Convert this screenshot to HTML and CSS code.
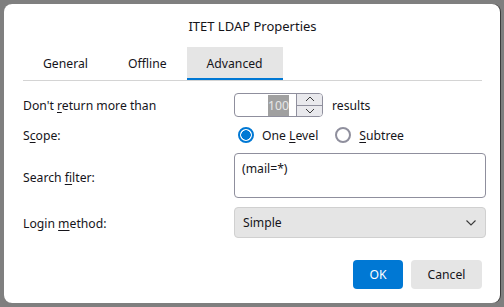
FILE: index.html
```html
<!DOCTYPE html>
<html lang="en">
<head>
  <meta charset="UTF-8">
  <title>ITET LDAP Properties</title>
  <link rel="stylesheet" href="styles.css">
</head>
<body>
  <div class="dialog">
    <div class="dialog-title">ITET LDAP Properties</div>

    <div class="tabs">
      <div class="tab">General</div>
      <div class="tab">Offline</div>
      <div class="tab active">Advanced</div>
    </div>

    <div class="form">
      <div class="label">Don't <u>r</u>eturn more than</div>
      <div class="control inline">
        <div class="spinner">
          <div class="spinner-value"><span class="selected">100</span></div>
          <div class="spinner-buttons">
            <div class="spin-btn">
              <svg viewBox="0 0 12 8"><path d="M2 6l4-4 4 4" fill="none" stroke="#3a3a3a" stroke-width="1"/></svg>
            </div>
            <div class="spin-btn">
              <svg viewBox="0 0 12 8"><path d="M2 2l4 4 4-4" fill="none" stroke="#3a3a3a" stroke-width="1"/></svg>
            </div>
          </div>
        </div>
        <span>results</span>
      </div>

      <div class="label">S<u>c</u>ope:</div>
      <div class="control inline radios">
        <label class="radio"><span class="radio-dot checked"></span><span>One <u>L</u>evel</span></label>
        <label class="radio"><span class="radio-dot"></span><span><u>S</u>ubtree</span></label>
      </div>

      <div class="label filter-label">Search <u>f</u>ilter:</div>
      <div class="control">
        <div class="textarea">(mail=*)</div>
      </div>

      <div class="label method-label">Login <u>m</u>ethod:</div>
      <div class="control">
        <div class="select">
          <span>Simple</span>
          <svg viewBox="0 0 12 8"><path d="M1.5 1.5l4.5 4.5 4.5-4.5" fill="none" stroke="#3a3a3a" stroke-width="1.1"/></svg>
        </div>
      </div>
    </div>

    <div class="buttons">
      <button class="btn primary">OK</button>
      <button class="btn">Cancel</button>
    </div>
  </div>
</body>
</html>
```

FILE: styles.css
```css
* {
  box-sizing: border-box;
  margin: 0;
  padding: 0;
}

body {
  font-family: 'Noto Sans', sans-serif;
  font-size: 12px;
  color: #15141a;
  background-color: #7f7f7f;
  padding: 4px;
  height: 307px;
  overflow: hidden;
}

.dialog {
  background-color: #fff;
  border-radius: 8px;
  width: 496px;
  height: 299px;
  padding: 0 18px 0 19px;
  box-shadow: 1px 0 0 #3c3c3c;
}

.dialog-title {
  text-align: center;
  font-size: 13px;
  height: 43px;
  line-height: 44px;
}

.tabs {
  display: flex;
  border-bottom: 1px solid #d4d4d4;
  width: 459px;
}

.tab {
  padding: 0 20px;
  height: 33px;
  line-height: 33px;
  font-size: 12.2px;
}

.tab.active {
  background-color: #e5e5e5;
  border-bottom: 2px solid #0078d4;
}

.form {
  display: grid;
  grid-template-columns: 211px 252px;
  align-items: center;
  margin-top: 12px;
}

.label {
  font-size: 12.2px;
  padding-top: 1px;
}

.filter-label {
  padding-top: 3px;
}

.method-label {
  padding-top: 11px;
}

.label u, .radio u {
  text-underline-offset: 2px;
}

.control.inline {
  display: flex;
  align-items: center;
  gap: 9px;
}

.spinner {
  display: flex;
  width: 89px;
  height: 24px;
  border: 1px solid #8f8f9d;
  border-radius: 4px;
  overflow: hidden;
}

.spinner-value {
  flex: 1;
  display: flex;
  align-items: center;
  justify-content: flex-end;
  padding-right: 7px;
}

.selected {
  background-color: #a0a0a0;
  color: #e8e8e8;
  padding: 2px 0;
  font-size: 12.2px;
}

.spinner-buttons {
  width: 26px;
  display: flex;
  flex-direction: column;
  border-left: 1px solid #8f8f9d;
}

.spin-btn {
  flex: 1;
  background-color: #e9e9ed;
  display: flex;
  align-items: center;
  justify-content: center;
}

.spin-btn + .spin-btn {
  border-top: 1px solid #8f8f9d;
}

.spin-btn svg {
  width: 12px;
  height: 8px;
}

.control span {
  font-size: 12.2px;
}

.radios {
  height: 36px;
  gap: 0;
  margin-left: 4px;
}

.radio {
  display: flex;
  align-items: center;
  gap: 8px;
  margin-right: 8px;
}

.radio-dot {
  width: 16px;
  height: 16px;
  border-radius: 50%;
  border: 2px solid #8f8f9d;
  background-color: #fff;
}

.radio-dot.checked {
  border: 2px solid #0078d4;
  background: radial-gradient(circle, #0078d4 0 4.5px, #fff 5px);
}

.textarea {
  height: 45px;
  border: 1px solid #8f8f9d;
  border-radius: 4px;
  padding: 6px 7px;
  font-size: 12.2px;
}

.select {
  margin-top: 9px;
  height: 31px;
  background-color: #e5e5e5;
  border: 1px solid #d0d0d0;
  border-radius: 4px;
  display: flex;
  align-items: center;
  justify-content: space-between;
  padding: 0 8px;
}

.select svg {
  width: 12px;
  height: 8px;
}

.buttons {
  display: flex;
  justify-content: flex-end;
  gap: 8px;
  margin-top: 22px;
  width: 459px;
}

.btn {
  font-family: 'Noto Sans', sans-serif;
  font-size: 12.2px;
  color: #15141a;
  border: none;
  border-radius: 4px;
  height: 29px;
  background-color: #e5e5e5;
  width: 71px;
}

.btn.primary {
  background-color: #0078d4;
  color: #fff;
  width: 50px;
}
```
